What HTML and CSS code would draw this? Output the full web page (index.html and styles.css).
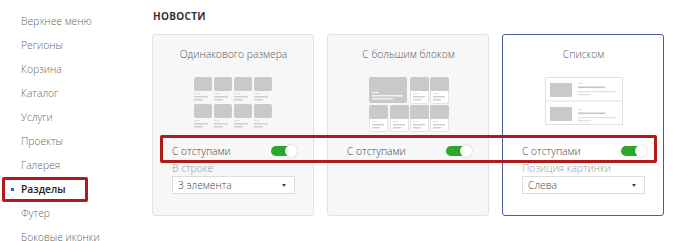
FILE: index.html
```html
<!DOCTYPE html>
<html lang="ru">
<head>
  <meta charset="UTF-8">
  <title>Разделы — Новости</title>
  <link rel="stylesheet" href="styles.css">
</head>
<body>
<div class="page">
  <ul class="sidebar">
    <li>Верхнее меню</li>
    <li>Регионы</li>
    <li>Корзина</li>
    <li>Каталог</li>
    <li>Услуги</li>
    <li>Проекты</li>
    <li>Галерея</li>
    <li class="active">Разделы</li>
    <li>Футер</li>
    <li>Боковые иконки</li>
  </ul>

  <div class="main">
    <h2>Новости</h2>
    <div class="cards">
      <div class="card">
        <div class="card-title">Одинакового размера</div>
        <div class="preview">
          <svg width="80" height="52" viewBox="0 0 80 52">
            <g fill="#c9c9c9">
              <rect x="0" y="0" width="18" height="14" rx="2"/>
              <rect x="20" y="0" width="18" height="14" rx="2"/>
              <rect x="40" y="0" width="18" height="14" rx="2"/>
              <rect x="60" y="0" width="18" height="14" rx="2"/>
              <rect x="0" y="27" width="18" height="14" rx="2"/>
              <rect x="20" y="27" width="18" height="14" rx="2"/>
              <rect x="40" y="27" width="18" height="14" rx="2"/>
              <rect x="60" y="27" width="18" height="14" rx="2"/>
            </g>
            <g fill="#e2e2e2">
              <rect x="0" y="16" width="6" height="1.2"/><rect x="20" y="16" width="6" height="1.2"/>
              <rect x="40" y="16" width="6" height="1.2"/><rect x="60" y="16" width="6" height="1.2"/>
              <rect x="0" y="43" width="6" height="1.2"/><rect x="20" y="43" width="6" height="1.2"/>
              <rect x="40" y="43" width="6" height="1.2"/><rect x="60" y="43" width="6" height="1.2"/>
            </g>
            <g fill="#cfcfcf">
              <rect x="0" y="19" width="14" height="1.5"/><rect x="20" y="19" width="14" height="1.5"/>
              <rect x="40" y="19" width="14" height="1.5"/><rect x="60" y="19" width="14" height="1.5"/>
              <rect x="0" y="22" width="9" height="1.5"/><rect x="20" y="22" width="9" height="1.5"/>
              <rect x="40" y="22" width="9" height="1.5"/><rect x="60" y="22" width="9" height="1.5"/>
              <rect x="0" y="46" width="14" height="1.5"/><rect x="20" y="46" width="14" height="1.5"/>
              <rect x="40" y="46" width="14" height="1.5"/><rect x="60" y="46" width="14" height="1.5"/>
              <rect x="0" y="49" width="9" height="1.5"/><rect x="20" y="49" width="9" height="1.5"/>
              <rect x="40" y="49" width="9" height="1.5"/><rect x="60" y="49" width="9" height="1.5"/>
            </g>
          </svg>
        </div>
        <div class="toggle-row">
          <span>С отступами</span>
          <span class="switch on"></span>
        </div>
        <div class="field-label">В строке</div>
        <div class="select">3 элемента</div>
      </div>

      <div class="card">
        <div class="card-title">С большим блоком</div>
        <div class="preview">
          <svg width="80" height="55" viewBox="0 0 80 55">
            <g fill="#fff" stroke="#e3e3e3" stroke-width="1">
              <rect x="41.5" y="0.5" width="18" height="26" rx="2"/>
              <rect x="61.5" y="0.5" width="18" height="26" rx="2"/>
              <rect x="0.5" y="28.5" width="18" height="26" rx="2"/>
              <rect x="21.5" y="28.5" width="18" height="26" rx="2"/>
              <rect x="41.5" y="28.5" width="18" height="26" rx="2"/>
              <rect x="61.5" y="28.5" width="18" height="26" rx="2"/>
            </g>
            <g fill="#c9c9c9">
              <rect x="0" y="0" width="38" height="26" rx="2"/>
              <rect x="41" y="0" width="19" height="14" rx="2"/>
              <rect x="61" y="0" width="19" height="14" rx="2"/>
              <rect x="0" y="28" width="19" height="14" rx="2"/>
              <rect x="21" y="28" width="19" height="14" rx="2"/>
              <rect x="41" y="28" width="19" height="14" rx="2"/>
              <rect x="61" y="28" width="19" height="14" rx="2"/>
            </g>
            <g fill="#f2f2f2">
              <rect x="3" y="15" width="7" height="1.2"/>
              <rect x="3" y="18" width="31" height="1.5"/>
              <rect x="3" y="21" width="21" height="1.5"/>
            </g>
            <g fill="#e2e2e2">
              <rect x="44" y="16" width="5" height="1.2"/><rect x="64" y="16" width="5" height="1.2"/>
              <rect x="3" y="44" width="5" height="1.2"/><rect x="24" y="44" width="5" height="1.2"/>
              <rect x="44" y="44" width="5" height="1.2"/><rect x="64" y="44" width="5" height="1.2"/>
            </g>
            <g fill="#cfcfcf">
              <rect x="44" y="19" width="12" height="1.5"/><rect x="64" y="19" width="12" height="1.5"/>
              <rect x="44" y="22" width="8" height="1.5"/><rect x="64" y="22" width="8" height="1.5"/>
              <rect x="3" y="47" width="12" height="1.5"/><rect x="24" y="47" width="12" height="1.5"/>
              <rect x="44" y="47" width="12" height="1.5"/><rect x="64" y="47" width="12" height="1.5"/>
              <rect x="3" y="50" width="8" height="1.5"/><rect x="24" y="50" width="8" height="1.5"/>
              <rect x="44" y="50" width="8" height="1.5"/><rect x="64" y="50" width="8" height="1.5"/>
            </g>
          </svg>
        </div>
        <div class="toggle-row">
          <span>С отступами</span>
          <span class="switch on"></span>
        </div>
      </div>

      <div class="card selected">
        <div class="card-title">Списком</div>
        <div class="preview">
          <svg width="78" height="48" viewBox="0 0 78 48">
            <rect x="0.5" y="0.5" width="77" height="47" fill="#fff" stroke="#e0e0e0"/>
            <line x1="0.5" y1="24" x2="77.5" y2="24" stroke="#e0e0e0"/>
            <g fill="#c9c9c9">
              <rect x="5" y="6" width="22" height="14"/>
              <rect x="5" y="30" width="22" height="14"/>
            </g>
            <g fill="#e2e2e2">
              <rect x="33" y="6" width="5" height="1"/>
              <rect x="33" y="32" width="5" height="1"/>
              <rect x="33" y="14" width="38" height="1.3"/>
              <rect x="33" y="17" width="13" height="1.3"/>
              <rect x="33" y="40" width="38" height="1.3"/>
              <rect x="33" y="43" width="13" height="1.3"/>
            </g>
            <g fill="#c4c4c4">
              <rect x="33" y="9.5" width="27" height="1.6"/>
              <rect x="33" y="35.5" width="27" height="1.6"/>
            </g>
          </svg>
        </div>
        <div class="toggle-row">
          <span>С отступами</span>
          <span class="switch on"></span>
        </div>
        <div class="field-label">Позиция картинки</div>
        <div class="select">Слева</div>
      </div>
    </div>
    <div class="mark mark-toggles"></div>
  </div>
</div>
</body>
</html>
```

FILE: styles.css
```css
body {
  margin: 0;
  background: #fff;
  font-family: 'Open Sans', Arial, sans-serif;
  font-size: 10.3px;
  font-weight: 300;
  color: #555;
}
.page {
  display: flex;
}
.sidebar {
  list-style: none;
  margin: 0;
  padding: 9px 0 0 0;
  width: 152px;
  flex-shrink: 0;
}
.sidebar li {
  height: 24px;
  line-height: 24px;
  padding-left: 21px;
  color: #666;
  position: relative;
}
.sidebar li.active {
  color: #222;
  font-weight: 600;
}
.sidebar li.active::before {
  content: '';
  position: absolute;
  left: 11px;
  top: 11px;
  width: 3px;
  height: 3px;
  background: #3b5fb8;
}
.sidebar li.active::after {
  content: '';
  position: absolute;
  left: 2px;
  top: 0;
  width: 80px;
  height: 19px;
  border: 3px solid #b01a1a;
  border-radius: 2px;
}
.main {
  position: relative;
  flex: 1;
}
h2 {
  margin: 9px 0 0 1px;
  font-size: 10px;
  font-weight: 700;
  line-height: 14px;
  text-transform: uppercase;
  letter-spacing: 0.3px;
  color: #333;
}
.cards {
  display: flex;
  gap: 13px;
  margin-top: 11px;
}
.card {
  box-sizing: border-box;
  width: 162px;
  height: 182px;
  padding: 0 18px 0 19px;
  background: #f7f7f7;
  border: 1px solid #e2e2e2;
  border-radius: 3px;
}
.card.selected {
  background: #fff;
  border-color: #4a5c9a;
}
.card-title {
  margin-top: 12px;
  line-height: 14px;
  text-align: center;
  color: #555;
}
.preview {
  display: flex;
  justify-content: center;
  margin-top: 16px;
  height: 55px;
}
.toggle-row {
  display: flex;
  justify-content: space-between;
  align-items: center;
  height: 16px;
  margin-top: 11px;
  color: #444;
}
.switch {
  position: relative;
  width: 24px;
  height: 10px;
  border-radius: 5px;
  background: #2ba82b;
}
.switch::after {
  content: '';
  position: absolute;
  right: -2px;
  top: -1px;
  width: 12px;
  height: 12px;
  border-radius: 50%;
  background: #fff;
  box-shadow: 0 0 2px #0004;
}
.field-label {
  margin-top: 3px;
  line-height: 13px;
  color: #999;
}
.select {
  position: relative;
  box-sizing: border-box;
  height: 18px;
  line-height: 16px;
  padding: 0 5px;
  margin-top: 1px;
  background: #fff;
  border: 1px solid #ddd;
  color: #444;
}
.select::after {
  content: '';
  position: absolute;
  right: 8px;
  top: 7px;
  border-left: 2px solid transparent;
  border-right: 2px solid transparent;
  border-top: 3px solid #444;
}
.mark {
  position: absolute;
  border: 3px solid #b01a1a;
  border-radius: 2px;
}
.mark-toggles {
  left: 8px;
  top: 135px;
  width: 491px;
  height: 22px;
}
```
